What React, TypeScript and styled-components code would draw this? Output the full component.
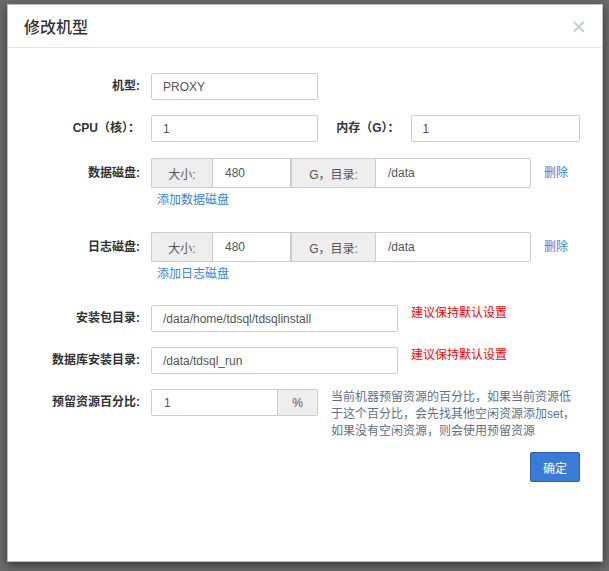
import styled, { createGlobalStyle } from 'styled-components';

const GlobalStyle = createGlobalStyle`
  html, body {
    margin: 0;
    padding: 0;
    background: #6b6b6b;
  }
  * {
    box-sizing: border-box;
  }
`;

const Backdrop = styled.div`
  width: 609px;
  height: 571px;
  padding: 4px 6px 9px 7px;
  background: #6b6b6b;
  font-family: "Liberation Sans", "Noto Sans CJK SC", sans-serif;
  font-size: 12px;
  color: #333;
`;

const Modal = styled.div`
  width: 596px;
  height: 558px;
  background: #fff;
  border: 1px solid rgba(0, 0, 0, 0.25);
  box-shadow: 0 3px 9px rgba(0, 0, 0, 0.5);
  display: flex;
  flex-direction: column;
`;

const Header = styled.div`
  height: 43px;
  flex: 0 0 43px;
  padding: 0 15px 0 16px;
  border-bottom: 1px solid #e5e5e5;
  display: flex;
  align-items: center;
  justify-content: space-between;
`;

const Title = styled.h4`
  margin: 0;
  font-size: 16px;
  font-weight: 500;
  color: #333;
  font-family: "Noto Sans CJK SC", sans-serif;
`;

const CloseButton = styled.button`
  border: none;
  background: none;
  padding: 0;
  font-size: 20px;
  font-weight: normal;
  line-height: 1;
  color: #c8c8c8;
  cursor: pointer;
  font-family: "DejaVu Sans", sans-serif;
`;

const Body = styled.div`
  padding: 25px 22px 0 0;
  display: flex;
  flex-direction: column;
`;

const FormRow = styled.div<{ $mt?: number; $top?: boolean }>`
  display: flex;
  align-items: ${({ $top }) => ($top ? 'flex-start' : 'center')};
  margin-top: ${({ $mt }) => $mt ?? 0}px;
`;

const Label = styled.label<{ $w?: number; $h?: number }>`
  flex: 0 0 ${({ $w }) => $w ?? 132}px;
  margin-right: 11px;
  text-align: right;
  font-weight: bold;
  color: #333;
  line-height: ${({ $h }) => $h ?? 27}px;
  white-space: nowrap;
`;

const TextInput = styled.div<{ $w: number }>`
  width: ${({ $w }) => $w}px;
  height: 27px;
  border: 1px solid #ccc;
  border-radius: 2px;
  padding: 0 11px;
  display: flex;
  align-items: center;
  color: #555;
  background: #fff;
`;

const InputGroup = styled.div<{ $h: number }>`
  display: flex;
  height: ${({ $h }) => $h}px;
`;

const GroupAddon = styled.div<{ $w: number; $first?: boolean }>`
  width: ${({ $w }) => $w}px;
  border: 1px solid #ccc;
  border-right: none;
  background: #eee;
  color: #555;
  display: flex;
  align-items: center;
  justify-content: center;
  border-radius: ${({ $first }) => ($first ? '2px 0 0 2px' : '0')};
`;

const TailAddon = styled.div<{ $w: number }>`
  width: ${({ $w }) => $w}px;
  border: 1px solid #ccc;
  border-left: none;
  background: #eee;
  color: #555;
  display: flex;
  align-items: center;
  justify-content: center;
  border-radius: 0 2px 2px 0;
`;

const GroupInput = styled.div<{ $w: number; $last?: boolean; $first?: boolean }>`
  width: ${({ $w }) => $w}px;
  border: 1px solid #ccc;
  background: #fff;
  color: #555;
  padding: 0 12px;
  display: flex;
  align-items: center;
  border-radius: ${({ $last, $first }) =>
    $last ? '0 2px 2px 0' : $first ? '2px 0 0 2px' : '0'};
`;

const DiskColumn = styled.div`
  display: flex;
  flex-direction: column;
`;

const LinkText = styled.a`
  color: #3d7fd6;
  text-decoration: none;
  cursor: pointer;
`;

const AddLink = styled(LinkText)`
  margin-top: 3px;
  padding-left: 6px;
  line-height: 18px;
`;

const DeleteLink = styled(LinkText)`
  margin-left: 13px;
  line-height: 30px;
  align-self: flex-start;
`;

const Hint = styled.span`
  margin-left: 13px;
  color: #f00;
  line-height: 17px;
`;

const HelpText = styled.p`
  margin: 0 0 0 13px;
  width: 245px;
  color: #5f7185;
  line-height: 17px;
`;

const Footer = styled.div`
  display: flex;
  justify-content: flex-end;
  margin-top: 12px;
`;

const PrimaryButton = styled.button`
  width: 50px;
  height: 30px;
  border: 1px solid #2b62b4;
  border-radius: 2px;
  background: #3a7bd8;
  color: #fff;
  font-size: 12px;
  font-family: "Noto Sans CJK SC", sans-serif;
  cursor: pointer;
`;

const DiskRow = ({ label, size, dir, addText, mt }: { label: string; size: string; dir: string; addText: string; mt: number }) => (
  <FormRow $mt={mt} $top>
    <Label $h={30}>{label}</Label>
    <DiskColumn>
      <InputGroup $h={30}>
        <GroupAddon $w={61} $first>大小:</GroupAddon>
        <GroupInput $w={79}>{size}</GroupInput>
        <GroupAddon $w={84}>G，目录:</GroupAddon>
        <GroupInput $w={156} $last>{dir}</GroupInput>
      </InputGroup>
      <AddLink>{addText}</AddLink>
    </DiskColumn>
    <DeleteLink>删除</DeleteLink>
  </FormRow>
);

export default function App() {
  return (
    <>
      <GlobalStyle />
      <Backdrop>
        <Modal>
          <Header>
            <Title>修改机型</Title>
            <CloseButton>×</CloseButton>
          </Header>
          <Body>
            <FormRow>
              <Label>机型:</Label>
              <TextInput $w={167}>PROXY</TextInput>
            </FormRow>
            <FormRow $mt={15}>
              <Label>CPU（核）：</Label>
              <TextInput $w={167}>1</TextInput>
              <Label $w={82}>内存（G）：</Label>
              <TextInput $w={170}>1</TextInput>
            </FormRow>
            <DiskRow label="数据磁盘:" size="480" dir="/data" addText="添加数据磁盘" mt={16} />
            <DiskRow label="日志磁盘:" size="480" dir="/data" addText="添加日志磁盘" mt={23} />
            <FormRow $mt={22} $top>
              <Label>安装包目录:</Label>
              <TextInput $w={247}>/data/home/tdsql/tdsqlinstall</TextInput>
              <Hint>建议保持默认设置</Hint>
            </FormRow>
            <FormRow $mt={15} $top>
              <Label>数据库安装目录:</Label>
              <TextInput $w={247}>/data/tdsql_run</TextInput>
              <Hint>建议保持默认设置</Hint>
            </FormRow>
            <FormRow $mt={15} $top>
              <Label>预留资源百分比:</Label>
              <InputGroup $h={27}>
                <GroupInput $w={127} $first>1</GroupInput>
                <TailAddon $w={40}>%</TailAddon>
              </InputGroup>
              <HelpText>
                当前机器预留资源的百分比，如果当前资源低于这个百分比，会先找其他空闲资源添加set，如果没有空闲资源，则会使用预留资源
              </HelpText>
            </FormRow>
            <Footer>
              <PrimaryButton>确定</PrimaryButton>
            </Footer>
          </Body>
        </Modal>
      </Backdrop>
    </>
  );
}
